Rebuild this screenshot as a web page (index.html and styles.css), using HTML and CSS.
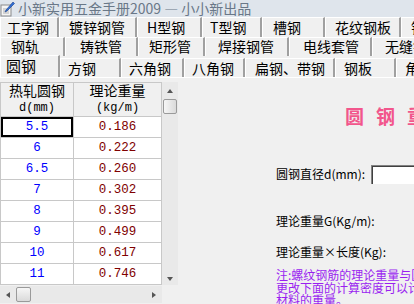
FILE: index.html
```html
<!DOCTYPE html>
<html lang="zh-CN">
<head>
    <meta charset="UTF-8">
    <meta name="viewport" content="width=device-width, initial-scale=1.0">
    <title>小新实用五金手册2009</title>
    <link rel="stylesheet" href="styles.css">
</head>
<body>
    <div class="titlebar">
        <svg class="appicon" width="15" height="16" viewBox="0 0 15 16">
            <rect x="1" y="4" width="10" height="11" fill="#f4f4f4" stroke="#8a8a8a"/>
            <line x1="3" y1="8" x2="9" y2="8" stroke="#b0b0b0"/>
            <line x1="3" y1="10" x2="9" y2="10" stroke="#b0b0b0"/>
            <line x1="3" y1="12" x2="9" y2="12" stroke="#b0b0b0"/>
            <path d="M13 1 L14.5 2.5 L7 10 L5 11 L6 9 Z" fill="#2f6fd6" stroke="#1c3f8a" stroke-width="0.6"/>
        </svg>
        <span class="apptitle">小新实用五金手册2009 — 小小新出品</span>
    </div>

    <div class="tabs">
        <div class="tabrow row1">
            <div class="tab">工字钢</div>
            <div class="tab">镀锌钢管</div>
            <div class="tab">H型钢</div>
            <div class="tab">T型钢</div>
            <div class="tab">槽钢</div>
            <div class="tab">花纹钢板</div>
            <div class="tab">钢管</div>
        </div>
        <div class="tabrow row2">
            <div class="tab">钢轨</div>
            <div class="tab">铸铁管</div>
            <div class="tab">矩形管</div>
            <div class="tab">焊接钢管</div>
            <div class="tab">电线套管</div>
            <div class="tab">无缝钢管</div>
        </div>
        <div class="tabrow row3">
            <div class="tab active">圆钢</div>
            <div class="tab">方钢</div>
            <div class="tab">六角钢</div>
            <div class="tab">八角钢</div>
            <div class="tab">扁钢、带钢</div>
            <div class="tab">钢板</div>
            <div class="tab">角钢</div>
        </div>
    </div>

    <div class="main">
        <div class="gridwrap">
            <div class="gridbox">
                <table class="grid">
                    <thead>
                        <tr>
                            <th class="c1">热轧圆钢<br><span class="unit">d(mm)</span></th>
                            <th class="c2">理论重量<br><span class="unit">(kg/m)</span></th>
                        </tr>
                    </thead>
                    <tbody>
                        <tr><td class="d focus">5.5</td><td class="w">0.186</td></tr>
                        <tr><td class="d">6</td><td class="w">0.222</td></tr>
                        <tr><td class="d">6.5</td><td class="w">0.260</td></tr>
                        <tr><td class="d">7</td><td class="w">0.302</td></tr>
                        <tr><td class="d">8</td><td class="w">0.395</td></tr>
                        <tr><td class="d">9</td><td class="w">0.499</td></tr>
                        <tr><td class="d">10</td><td class="w">0.617</td></tr>
                        <tr><td class="d">11</td><td class="w">0.746</td></tr>
                    </tbody>
                </table>
                <div class="vscroll">
                    <div class="arrow up"></div>
                    <div class="thumb vthumb"></div>
                    <div class="vtrack"></div>
                    <div class="arrow down"></div>
                </div>
            </div>
            <div class="hscroll">
                <div class="arrow left"></div>
                <div class="thumb hthumb"></div>
                <div class="htrack"></div>
                <div class="arrow right"></div>
            </div>
        </div>

        <div class="panel">
            <div class="heading">圆钢重量计算</div>
            <div class="field">
                <span class="label">圆钢直径d(mm):</span>
                <input class="textbox" type="text">
            </div>
            <div class="label result1">理论重量G(Kg/m):</div>
            <div class="label result2">理论重量×长度(Kg):</div>
            <div class="note">注:螺纹钢筋的理论重量与圆钢相同，<br>更改下面的计算密度可以计算其它<br>材料的重量。</div>
        </div>
    </div>
</body>
</html>
```

FILE: styles.css
```css
body {
    margin: 0;
    width: 414px;
    height: 304px;
    overflow: hidden;
    background-color: #f0f0f0;
    font-family: "Noto Sans CJK SC", "DejaVu Sans", sans-serif;
    color: #000;
}
/* Barra de titulo */
.titlebar {
    height: 17px;
    display: flex;
    align-items: center;
    background-color: #dfe5ec;
    white-space: nowrap;
}
.appicon {
    flex: none;
}
.apptitle {
    margin-left: 3px;
    font-size: 14px;
    line-height: 17px;
    color: #6a7888;
}
/* Pestanas */
.tabs {
    white-space: nowrap;
}
.tabrow {
    display: flex;
    width: 520px;
}
.row1 {
    height: 20px;
}
.row2 {
    height: 19px;
}
.row3 {
    height: 21px;
    border-bottom: 1px solid #fff;
}
.tab {
    flex: none;
    box-sizing: border-box;
    height: 100%;
    font-size: 14px;
    line-height: 18px;
    padding-left: 9px;
    border-top: 1px solid #fff;
    border-left: 1px solid #fff;
    border-right: 2px solid #a0a0a0;
    background-color: #f0f0f0;
}
.row1 .tab:nth-child(1) { width: 59px; padding-left: 6px; }
.row1 .tab:nth-child(2) { width: 78px; }
.row1 .tab:nth-child(3) { width: 65px; }
.row1 .tab:nth-child(4) { width: 60px; padding-left: 7px; }
.row1 .tab:nth-child(5) { width: 63px; padding-left: 10px; }
.row1 .tab:nth-child(6) { width: 76px; }
.row1 .tab:nth-child(7) { width: 80px; }

.row2 .tab { line-height: 17px; padding-left: 12px; }
.row2 .tab:nth-child(1) { width: 65px; padding-left: 10px; }
.row2 .tab:nth-child(2) { width: 73px; padding-left: 14px; }
.row2 .tab:nth-child(3) { width: 67px; padding-left: 10px; }
.row2 .tab:nth-child(4) { width: 84px; }
.row2 .tab:nth-child(5) { width: 83px; padding-left: 13px; }
.row2 .tab:nth-child(6) { width: 90px; }

.row3 .tab {
    margin-top: 2px;
    height: 19px;
    padding-left: 7px;
}
.row3 .tab.active {
    margin-top: -1px;
    height: 22px;
    padding-left: 5px;
    line-height: 20px;
    font-size: 15px;
    width: 60px;
    position: relative;
    z-index: 1;
}
.row3 .tab:nth-child(2) { width: 61px; }
.row3 .tab:nth-child(3) { width: 63px; }
.row3 .tab:nth-child(4) { width: 61px; }
.row3 .tab:nth-child(5) { width: 90px; padding-left: 9px; }
.row3 .tab:nth-child(6) { width: 61px; padding-left: 8px; }
.row3 .tab:nth-child(7) { width: 70px; padding-left: 8px; }

/* Zona principal */
.main {
    display: flex;
}
.gridwrap {
    flex: none;
    width: 178px;
    margin-top: 4px;
}
.gridbox {
    display: flex;
    height: 203px;
    overflow: hidden;
}
.grid {
    border-collapse: collapse;
    width: 162px;
    table-layout: fixed;
    background-color: #fff;
}
.grid th, .grid td {
    border: 1px solid #c8c8c8;
    padding: 0;
    text-align: center;
}
.grid th {
    height: 33px;
    background-color: #f0f0f0;
    font-weight: normal;
    font-size: 14px;
    line-height: 15px;
}
.grid .c1 { width: 72px; }
.grid .unit {
    font-family: "Liberation Mono", monospace;
    font-size: 12px;
}
.grid td {
    height: 19.6px;
    font-family: "Liberation Mono", monospace;
    font-size: 12.5px;
    line-height: 19px;
}
.d {
    color: #0000ff;
}
.w {
    color: #800000;
}
.focus {
    box-shadow: inset 0 0 0 2px #000;
}
/* Barras de desplazamiento */
.vscroll {
    width: 16px;
    display: flex;
    flex-direction: column;
    align-items: center;
    background-color: #e9e9e9;
}
.vtrack, .htrack {
    flex: 1;
}
.arrow {
    flex: none;
    width: 0;
    height: 0;
    border-style: solid;
    border-color: transparent;
}
.arrow.up {
    margin: 7px 0 6px;
    border-width: 0 3.5px 4px;
    border-bottom-color: #555;
}
.arrow.down {
    margin: 0 0 4px;
    border-width: 4px 3.5px 0;
    border-top-color: #555;
}
.thumb {
    flex: none;
    box-sizing: border-box;
    border: 1px solid #9a9a9a;
    border-radius: 2px;
    background: linear-gradient(to right, #f6f6f6, #dadada);
}
.vthumb {
    width: 14px;
    height: 15px;
}
.hscroll {
    display: flex;
    align-items: center;
    width: 162px;
    height: 17px;
    margin-top: 1px;
    background-color: #e9e9e9;
}
.arrow.left {
    margin: 0 6px 0 6px;
    border-width: 3.5px 4px 3.5px 0;
    border-right-color: #555;
}
.arrow.right {
    margin: 0 6px 0 0;
    border-width: 3.5px 0 3.5px 4px;
    border-left-color: #555;
}
.hthumb {
    width: 15px;
    height: 15px;
    background: linear-gradient(to bottom, #f6f6f6, #dadada);
}
/* Panel derecho */
.panel {
    flex: none;
    width: 320px;
    padding-left: 98px;
    white-space: nowrap;
}
.heading {
    margin-top: 26px;
    margin-left: 69px;
    font-size: 19px;
    font-weight: bold;
    line-height: 24px;
    letter-spacing: 12px;
    color: #f2568c;
}
.field {
    display: flex;
    align-items: center;
    margin-top: 36px;
    height: 20px;
}
.label {
    font-size: 12px;
    line-height: 16px;
}
.textbox {
    margin: 0 0 0 6px;
    width: 120px;
    height: 19px;
    box-sizing: border-box;
    border: none;
    border-top: 1px solid #828282;
    border-left: 1px solid #828282;
    box-shadow: inset 1px 1px 0 #404040;
    background-color: #fff;
    padding: 0;
}
.result1 {
    margin-top: 29px;
}
.result2 {
    margin-top: 15px;
}
.note {
    margin-top: 9px;
    font-size: 12px;
    line-height: 12.5px;
    color: #9a1ff0;
}
```
